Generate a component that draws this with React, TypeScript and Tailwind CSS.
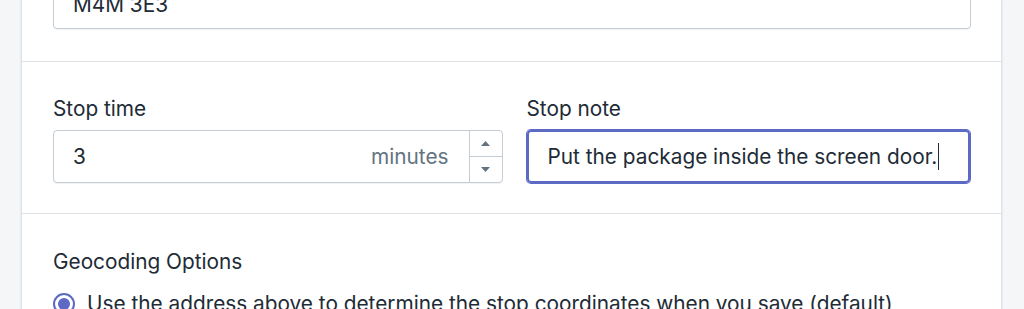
export default function App() {
  const font = { fontFamily: 'Inter, "Liberation Sans", sans-serif' };

  return (
    <div className="flex min-h-[309px] w-[1024px] bg-[#f4f6f8] text-[20.8px] leading-[28px] text-[#212b36]" style={font}>
      <div className="ml-[21px] flex w-[981px] flex-col border-x border-[#dfe3e8] bg-white shadow-[0_0_2px_rgba(63,63,68,0.15)]">
        {/* Postal code */}
        <section className="border-b border-[#dfe3e8] px-[31px] pb-8">
          <div className="-mt-[24px] flex h-[53px] w-[918px] items-center rounded-[4px] border border-[#c4cdd5] px-[19px] pt-1 shadow-[0_1px_0_rgba(22,29,37,0.05)]">
            M4M 3E3
          </div>
        </section>

        {/* Stop time / note */}
        <section className="flex gap-6 border-b border-[#dfe3e8] px-[31px] pt-[33px] pb-[30px]">
          <div className="w-[450px]">
            <label className="block">Stop time</label>
            <div className="mt-[7px] flex h-[53px] rounded-[4px] border border-[#c4cdd5] shadow-[0_1px_0_rgba(22,29,37,0.05)]">
              <div className="flex flex-1 items-center justify-between pr-5 pl-[19px]">
                <span>3</span>
                <span className="text-[#637381]">minutes</span>
              </div>
              <div className="flex w-[33px] flex-col border-l border-[#c4cdd5]">
                <button className="flex flex-1 items-center justify-center border-b border-[#c4cdd5]">
                  <svg width="9" height="5" viewBox="0 0 9 5">
                    <path d="M4.5 0L9 5H0z" fill="#637381" />
                  </svg>
                </button>
                <button className="flex flex-1 items-center justify-center">
                  <svg width="9" height="5" viewBox="0 0 9 5">
                    <path d="M0 0h9L4.5 5z" fill="#637381" />
                  </svg>
                </button>
              </div>
            </div>
          </div>
          <div className="w-[444px]">
            <label className="block">Stop note</label>
            <div className="mt-[7px] flex h-[53px] items-center rounded-[4px] border-2 border-[#5c6ac4] px-[19px] shadow-[0_0_0_1px_#5c6ac4]">
              <span>Put the package inside the screen door.</span>
              <span className="ml-px h-[27px] w-px bg-[#212b36]" />
            </div>
          </div>
        </section>

        {/* Geocoding */}
        <section className="px-[31px] pt-[34px]">
          <div>Geocoding Options</div>
          <label className="mt-[14px] flex items-center gap-3">
            <span className="flex h-[22px] w-[22px] shrink-0 items-center justify-center rounded-full border-2 border-[#5c6ac4]">
              <span className="h-[12px] w-[12px] rounded-full bg-[#5c6ac4]" />
            </span>
            <span>Use the address above to determine the stop coordinates when you save (default)</span>
          </label>
        </section>
      </div>
    </div>
  );
}
